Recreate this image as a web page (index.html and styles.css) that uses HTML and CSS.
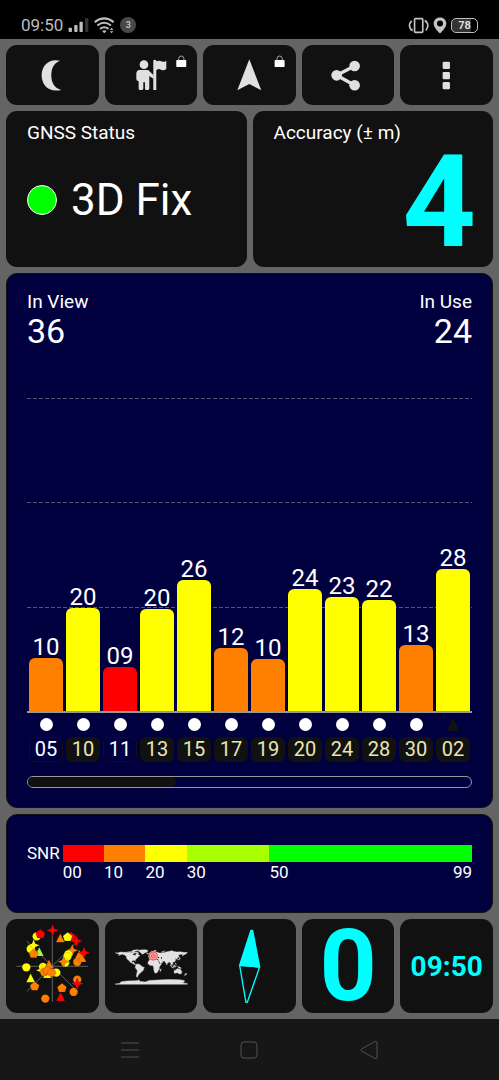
FILE: index.html
```html
<!DOCTYPE html>
<html lang="en">
<head>
<meta charset="utf-8">
<meta name="viewport" content="width=device-width, initial-scale=1">
<title>GNSS Status</title>
<link rel="stylesheet" href="styles.css">
</head>
<body>
<header class="status">
  <div class="status-group">
    <span class="status-time">09:50</span>
    <svg class="signal" viewBox="204 52 64 46" aria-hidden="true"><g fill="#bdbdbd"><rect x="206" y="83" width="10" height="13" rx="2"/><rect x="223" y="75" width="10" height="21" rx="2"/><rect x="239" y="65" width="10" height="31" rx="2"/></g><rect x="256" y="54" width="10" height="42" rx="2" fill="#333"/></svg>
    <svg class="wifi" viewBox="282 50 62 50" aria-hidden="true"><g fill="none" stroke="#bdbdbd" stroke-width="6"><path d="M284 65Q312 43 340 65"/><path d="M292 75Q312 59 332 75"/><path d="M300 85Q312 75 325 85"/></g><path d="M306 91Q312 87 319 91L312 98ZM329 88l5-6 5 6zM329 92l5 6 5-6z" fill="#bdbdbd"/></svg>
    <span class="count">3</span>
  </div>
  <div class="status-group right">
    <svg class="vibrate" viewBox="476 50 64 50" aria-hidden="true"><g fill="none" stroke="#c4c4c4" stroke-width="5"><rect x="496" y="54" width="25" height="42" rx="3"/><path d="M487 61Q474 75 487 90M530 61Q543 75 530 90"/></g><path d="M481 85l9 0 0 9zM527 57l8 6-8 3z" fill="#c4c4c4"/></svg>
    <svg class="pin" viewBox="552 50 42 50" aria-hidden="true"><path fill-rule="evenodd" fill="#c4c4c4" d="M573 51C562 51 554 59 554 69C554 80 565 91 573 99C581 91 592 80 592 69C592 59 584 51 573 51ZM573 60A9 9 0 1 1 573 78A9 9 0 1 1 573 60Z"/></svg>
    <span class="battery">78</span>
  </div>
</header>

<main class="app">
  <nav class="five" aria-label="Tools">
    <button class="tile" aria-label="Night mode"><svg viewBox="18 135 278 180"><path fill="#e0e0e0" d="M181 182C145 174 125 198 125 226C125 255 146 279 184 270C164 265 154 248 154 226C154 203 164 187 181 182Z"/></svg></button>
    <button class="tile" aria-label="Guide"><svg viewBox="314 135 278 180"><g fill="#e0e0e0"><circle cx="431" cy="194" r="13"/><path d="M417 210H441Q446 210 449 215L460 226V237L447 228V266Q447 270 443 270H437Q434 270 434 266V247H429V266Q429 270 425 270H418Q415 270 415 266V244Q408 243 408 237V220Q409 211 417 210Z"/><path d="M459 181Q463 178 468 181V184Q477 180 484 184Q491 188 498 182V207Q490 213 482 209Q475 205 468 211V270H459Z"/></g><rect x="528" y="180" width="30" height="21" rx="2" fill="#fff"/><path d="M535 181V176Q536 168 543 168Q550 168 551 176V181" fill="none" stroke="#aaa" stroke-width="3"/></svg></button>
    <button class="tile" aria-label="Navigate"><svg viewBox="609 135 278 180"><path fill="#e0e0e0" d="M748 178L784 271L748 252L712 271Z"/><rect x="824" y="180" width="30" height="21" rx="2" fill="#fff"/><path d="M831 181V176Q832 168 839 168Q846 168 847 176V181" fill="none" stroke="#aaa" stroke-width="3"/></svg></button>
    <button class="tile" aria-label="Share"><svg viewBox="158 135 278 180"><path d="M316 198L262 226L316 256" fill="none" stroke="#e0e0e0" stroke-width="10"/><g fill="#e0e0e0"><circle cx="316" cy="198" r="16"/><circle cx="262" cy="226" r="16"/><circle cx="316" cy="256" r="16"/></g></svg></button>
    <button class="tile" aria-label="More"><svg viewBox="454 135 278 180"><g fill="#e0e0e0"><rect x="582" y="185" width="22" height="22" rx="4"/><rect x="582" y="216" width="22" height="22" rx="4"/><rect x="582" y="246" width="22" height="22" rx="4"/></g></svg></button>
  </nav>

  <div class="two">
    <section class="card">
      <h2 class="label">GNSS Status</h2>
      <p class="fix"><span class="fix-dot"></span>3D Fix</p>
    </section>
    <section class="card">
      <h2 class="label">Accuracy (± m)</h2>
      <p class="accuracy">4</p>
    </section>
  </div>

  <section class="panel chart">
    <div class="totals">
      <div><h2 class="label">In View</h2><p class="total">36</p></div>
      <div class="end"><h2 class="label">In Use</h2><p class="total">24</p></div>
    </div>
    <div class="plot">
      <div class="lines"><i></i><i></i><i></i></div>
      <div class="bars">
        <div class="bar-col"><span>10</span><div class="bar orange" style="height:16.8%"></div></div>
        <div class="bar-col"><span>20</span><div class="bar yellow" style="height:32.8%"></div></div>
        <div class="bar-col"><span>09</span><div class="bar red" style="height:14.2%"></div></div>
        <div class="bar-col"><span>20</span><div class="bar yellow" style="height:32.5%"></div></div>
        <div class="bar-col"><span>26</span><div class="bar yellow" style="height:41.7%"></div></div>
        <div class="bar-col"><span>12</span><div class="bar orange" style="height:20%"></div></div>
        <div class="bar-col"><span>10</span><div class="bar orange" style="height:16.5%"></div></div>
        <div class="bar-col"><span>24</span><div class="bar yellow" style="height:39%"></div></div>
        <div class="bar-col"><span>23</span><div class="bar yellow" style="height:36.4%"></div></div>
        <div class="bar-col"><span>22</span><div class="bar yellow" style="height:35.5%"></div></div>
        <div class="bar-col"><span>13</span><div class="bar orange" style="height:21%"></div></div>
        <div class="bar-col"><span>28</span><div class="bar yellow" style="height:45.3%"></div></div>
      </div>
    </div>
    <div class="sats">
      <div class="sat"><i class="dot"></i><span class="chip open">05</span></div>
      <div class="sat"><i class="dot"></i><span class="chip">10</span></div>
      <div class="sat"><i class="dot"></i><span class="chip open">11</span></div>
      <div class="sat"><i class="dot"></i><span class="chip">13</span></div>
      <div class="sat"><i class="dot"></i><span class="chip">15</span></div>
      <div class="sat"><i class="dot"></i><span class="chip">17</span></div>
      <div class="sat"><i class="dot"></i><span class="chip">19</span></div>
      <div class="sat"><i class="dot"></i><span class="chip">20</span></div>
      <div class="sat"><i class="dot"></i><span class="chip">24</span></div>
      <div class="sat"><i class="dot"></i><span class="chip">28</span></div>
      <div class="sat"><i class="dot"></i><span class="chip">30</span></div>
      <div class="sat"><i class="dot triangle"></i><span class="chip">02</span></div>
    </div>
    <div class="scroll"><div class="scroll-thumb"></div></div>
  </section>

  <section class="panel snr">
    <span class="snr-name">SNR</span>
    <div class="scale">
      <div class="seg s10 red">00</div>
      <div class="seg s10 orange">10</div>
      <div class="seg s10 yellow">20</div>
      <div class="seg s20 lime">30</div>
      <div class="seg s49 green"><span>50</span><span>99</span></div>
    </div>
  </section>

  <div class="five">
    <button class="tile" aria-label="Sky view"><svg viewBox="18 12 278 282">
      <defs>
        <path id="tri" d="M0-14L13 12H-13Z"/><path id="pent" d="M0-14L14-3L9 12H-9L-14-3Z"/><path id="star" d="M0-18L5-5L18 0L5 5L0 18L-5 5L-18 0L-5-5Z"/><circle id="cir" r="12.5"/>
      </defs>
      <g fill="none" stroke="#8a8a8a" stroke-width="2"><path d="M49 154H264M157 47V261M80 78L233 230M80 230L233 78"/></g>
      <g stroke="#111" stroke-opacity=".45" stroke-width="1">
        <g fill="#ff0"><use href="#cir" x="110" y="64"/><use href="#cir" x="92" y="102"/><use href="#star" x="101" y="91"/></g>
        <use href="#pent" x="121" y="57" fill="red"/><use href="#star" x="158" y="46" fill="red"/>
        <use href="#tri" x="118" y="111" fill="#a0ff40"/><use href="#pent" x="101" y="116" fill="#ff8000"/>
        <use href="#tri" x="181" y="70" fill="#ff8000"/><use href="#pent" x="213" y="65" fill="red"/><use href="#pent" x="203" y="66" fill="#ff0"/><use href="#star" x="229" y="78" fill="red"/>
        <g fill="#ff8000"><use href="#star" x="217" y="106"/><use href="#cir" x="232" y="141"/><use href="#tri" x="238" y="119"/><use href="#tri" x="246" y="129"/></g>
        <use href="#star" x="252" y="113" fill="red"/>
        <g fill="#ff0"><use href="#cir" x="205" y="118"/><use href="#cir" x="202" y="125"/><use href="#cir" x="196" y="143"/><use href="#star" x="191" y="140" fill="#ff8000"/><use href="#cir" x="79" y="157"/><use href="#cir" x="129" y="156"/><use href="#star" x="126" y="166"/><use href="#tri" x="92" y="190"/><use href="#cir" x="169" y="173"/><use href="#tri" x="142" y="177"/></g>
        <g fill="#ff8000"><use href="#tri" x="147" y="148"/><use href="#star" x="140" y="164"/><use href="#cir" x="133" y="171"/><use href="#pent" x="143" y="167"/><use href="#cir" x="155" y="173"/><use href="#pent" x="104" y="214"/><use href="#pent" x="186" y="219"/><use href="#cir" x="136" y="251"/><use href="#cir" x="221" y="231"/><use href="#cir" x="232" y="194"/></g>
        <use href="#tri" x="182" y="246" fill="red"/><use href="#star" x="232" y="206" fill="red"/>
      </g></svg></button>
    <button class="tile" aria-label="World map"><svg viewBox="14 12 278 282">
      <g transform="translate(153 154) scale(.6 -.6)" fill="#e2e2e2" stroke="#e2e2e2" stroke-width="2">
        <path d="M-180 68L-168 66L-156 71L-141 70L-125 70L-110 68L-95 68L-95 72L-85 70L-82 67L-94 60L-92 57L-82 55L-80 51L-78 55L-77 62L-70 61L-65 59L-56 52L-66 50L-65 45L-70 43L-76 35L-81 31L-80 25L-84 30L-97 28L-97 22L-94 18L-90 21L-87 21L-88 16L-83 15L-83 10L-78 8L-85 9L-92 14L-105 20L-112 29L-117 33L-124 40L-124 48L-133 57L-145 60L-152 59L-164 54L-157 59L-165 61Z"/>
        <path d="M-73 78L-55 82L-30 83L-18 80L-20 72L-32 68L-43 60L-52 66L-55 72L-65 76ZM-120 72L-105 73L-90 75L-95 80L-70 83L-65 82L-80 76L-85 73L-110 69ZM-88 73L-75 72L-62 66L-66 62L-75 65ZM-24 65L-16 66L-14 64L-20 63ZM12 78L25 80L22 77ZM52 72L68 77L58 71Z"/>
        <path d="M-78 8L-72 12L-62 10L-51 4L-50 0L-35-6L-39-15L-41-22L-48-26L-54-34L-62-39L-65-45L-69-51L-67-55L-74-52L-74-42L-71-30L-70-18L-76-14L-81-5L-78 2Z"/>
        <path d="M-9 37L-9 43L-1 44L-4 48L3 51L8 54L10 57L12 54L20 55L24 59L30 60L22 61L25 65L18 60L16 56L12 58L5 59L5 62L14 68L25 71L40 67L44 66L55 68L68 69L73 72L80 73L104 78L113 74L130 71L140 73L160 70L180 69L178 65L170 60L163 58L157 51L155 58L162 62L142 59L135 54L140 48L130 42L129 35L126 37L121 40L118 38L122 36L120 30L121 27L113 22L106 20L109 12L104 9L100 13L103 2L98 9L97 16L91 22L87 20L80 15L80 10L77 8L73 17L70 22L66 25L57 27L50 30L56 25L59 22L52 16L44 13L39 21L35 28L36 36L27 37L23 37L20 40L13 45L18 40L16 38L9 44L3 43L0 39L-5 36Z"/>
        <path d="M-6 36L10 37L11 33L20 31L32 31L37 21L43 12L51 12L40-3L40-15L35-20L32-28L26-34L18-34L12-17L13-8L9 0L9 4L-8 5L-17 14L-16 22L-10 30ZM49-12L47-25L43-24L44-17ZM-5 50L1 52L-3 58L-6 56ZM131 32L140 36L142 44L145 43L141 34ZM95 5L105-5L103-6ZM105-6L115-8L106-8ZM109 2L117 7L118 1L114-4L110-2ZM119-5L121 1L125 1ZM120 18L126 7L122 10ZM131-1L141-3L151-10L138-8Z"/>
        <path d="M114-22L122-18L130-12L136-12L140-17L142-11L153-26L150-37L141-38L132-32L118-35L115-34ZM173-35L178-38L168-46L166-45ZM-180-88L-160-86L-150-77L-120-73L-75-72L-60-68L-60-75L-30-78L-10-71L30-69L60-67L90-66L140-67L165-71L165-78L155-84L180-86V-90H-180Z"/>
        <path fill="#111" stroke="none" d="M28 41L41 41L38 46L31 46ZM48 45L53 45L53 37L49 38ZM35 28L38 27L44 13L42 13Z"/>
      </g>
      <circle cx="159" cy="123" r="15" fill="#f4b5b5"/><g fill="none" stroke="#f24d4d" stroke-width="3"><circle cx="159" cy="123" r="12"/><circle cx="159" cy="123" r="6"/></g><circle cx="159" cy="123" r="2.5" fill="#f24d4d"/></svg></button>
    <button class="tile" aria-label="Compass"><svg viewBox="9 12 278 282"><g stroke="#0ff" stroke-width="4" stroke-linejoin="round"><path d="M153 46H158L179 156L119 151Z" fill="#0ff"/><path d="M119 151L179 156L142 262H138Z" fill="none"/></g></svg></button>
    <button class="tile speed">0</button>
    <button class="tile clock">09:50</button>
  </div>
</main>

<nav class="system" aria-label="System">
  <button aria-label="Recent apps"><svg viewBox="0 0 20 20"><path d="M1 3H19M1 10H19M1 17H19"/></svg></button>
  <button aria-label="Home"><svg viewBox="0 0 20 20"><rect x="2" y="2" width="16" height="16" rx="3"/></svg></button>
  <button aria-label="Back"><svg viewBox="0 0 20 20"><path d="M16 1.5Q18 1 18 3V17Q18 19 16 18.500L2.500 11Q1.500 10 2.500 9Z"/></svg></button>
</nav>
</body>
</html>
```
FILE: styles.css
```css
* { box-sizing: border-box; }
body {
  margin: 0;
  min-height: 100vh;
  display: flex;
  flex-direction: column;
  background: #646464;
  color: #fff;
  font-family: Roboto, "Liberation Sans", sans-serif;
}
h2, p { margin: 0; font-weight: 400; }
button { border: 0; padding: 0; font: inherit; color: inherit; background: none; }
svg { display: block; }

.status {
  display: flex;
  justify-content: space-between;
  height: 39px;
  padding: 11px 21px 0;
  background: #000;
  color: #bdbdbd;
}
.status-group { display: flex; align-items: center; height: 28px; gap: 5px; }
.right { gap: 4px; }
.status-time { font-size: 17px; line-height: 28px; }
.signal { width: 21px; height: 16px; }
.wifi { width: 21px; height: 17px; }
.vibrate { width: 21px; height: 17px; }
.pin { width: 14px; height: 17px; }
.count {
  width: 16px;
  height: 16px;
  border-radius: 50%;
  background: #484848;
  font-size: 9px;
  font-weight: 700;
  line-height: 16px;
  text-align: center;
}
.battery {
  width: 27px;
  height: 15px;
  border: 1px solid #bdbdbd;
  border-radius: 5px;
  background: linear-gradient(90deg, #333 78%, #000 78%);
  color: #ddd;
  font-size: 11px;
  font-weight: 700;
  line-height: 13px;
  text-align: center;
}

.app { flex: 1; display: flex; flex-direction: column; gap: 6px; padding: 6px; }
.five { display: grid; grid-template-columns: repeat(5, minmax(0, 1fr)); gap: 6px; }
.two { display: grid; grid-template-columns: 1fr 1fr; gap: 6px; }
.tile, .card { background: #111; border-radius: 11px; }
.tile svg { width: 100%; height: auto; }
.card { min-height: 156px; padding: 11px 17px 7px 21px; }
.label { font-size: 19px; line-height: 22px; }
.fix { display: flex; align-items: center; gap: 14px; margin-top: 30px; font-size: 44px; line-height: 52px; }
.fix-dot { width: 30px; height: 30px; border: 1px solid #fff; border-radius: 50%; background: #0f0; }
.accuracy { color: #0ff; font-size: 128px; font-weight: 700; line-height: 116px; text-align: right; }

.panel { background: #00003f; border: 1px solid #111; border-radius: 11px; padding: 0 20px; }
.chart { flex: 1; display: flex; flex-direction: column; padding-top: 17px; padding-bottom: 19px; }
.totals { display: flex; justify-content: space-between; margin-bottom: 49px; }
.total { font-size: 34px; line-height: 36px; }
.end { text-align: right; }

.plot { flex: 1; display: grid; min-height: 240px; border-bottom: 2px solid #999; }
.lines, .bars { grid-area: 1 / 1; }
.lines { display: grid; grid-template-rows: repeat(3, 1fr); }
.lines i { height: 1px; background: repeating-linear-gradient(90deg, #555577 0 4px, transparent 4px 6px); }
.bars, .sats { display: grid; grid-template-columns: repeat(12, minmax(0, 1fr)); gap: 3px; padding: 0 2px; }
.bar-col { display: flex; flex-direction: column; justify-content: flex-end; font-size: 24px; line-height: 22px; text-align: center; }
.bar { border-radius: 6px 6px 0 0; flex: none; }
.red { background: #f00; }
.orange { background: #ff8000; }
.yellow { background: #ff0; }
.lime { background: #a8ff00; }
.green { background: #0f0; }

.sats { padding-top: 5px; }
.sat { display: flex; flex-direction: column; align-items: center; gap: 6px; }
.dot { width: 13px; height: 13px; border-radius: 50%; background: #fff; }
.triangle { border-radius: 0; background: #111; clip-path: polygon(50% 0, 100% 100%, 0 100%); }
.chip {
  width: 100%;
  border: 1px solid #111;
  border-radius: 6px;
  background: #111;
  color: #e6e6b4;
  font-size: 20px;
  line-height: 23px;
  text-align: center;
}
.open { background: transparent; color: #fff; }
.scroll { height: 12px; margin-top: 14px; border: 1px solid #999; border-radius: 6px; }
.scroll-thumb { width: 33.33%; height: 10px; border-radius: 5px; background: #111; }

.snr { display: flex; gap: 3px; min-height: 99px; padding-top: 30px; font-size: 17px; line-height: 17px; }
.scale { flex: 1; display: flex; height: 17px; line-height: 21px; }
.seg { padding-top: 17px; min-width: 0; }
.s10 { flex: 10 1 0; }
.s20 { flex: 20 1 0; }
.s49 { flex: 49 1 0; display: flex; justify-content: space-between; }

.speed, .clock { color: #0ff; font-weight: 700; }
.speed { font-size: 100px; line-height: 94px; }
.clock { font-size: 28px; }

.system { display: grid; grid-template-columns: repeat(3, 1fr); height: 61px; padding: 0 14%; background: #171717; }
.system button { display: grid; place-items: center; }
.system svg { width: 20px; height: 20px; fill: none; stroke: #505050; stroke-width: 1; }
```
